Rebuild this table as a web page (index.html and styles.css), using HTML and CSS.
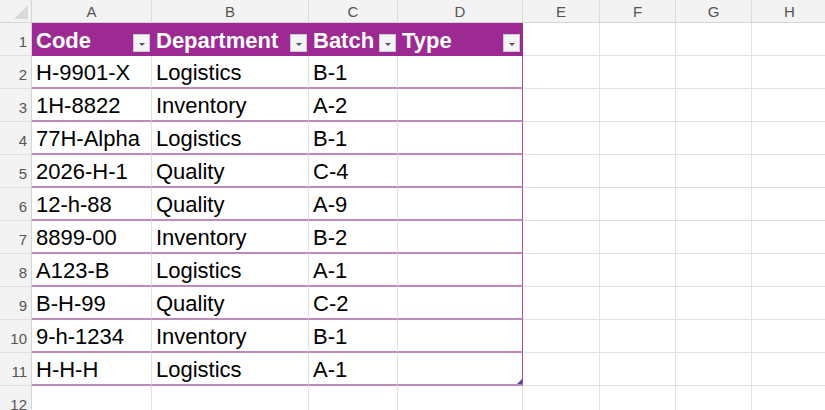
FILE: index.html
```html
<!DOCTYPE html>
<html>
<head>
<meta charset="utf-8">
<link rel="stylesheet" href="styles.css">
</head>
<body>
<div class="sheet">
  <div class="corner"><span class="tri"></span></div>
  <div class="colh">A</div><div class="colh">B</div><div class="colh">C</div><div class="colh">D</div><div class="colh">E</div><div class="colh">F</div><div class="colh">G</div><div class="colh">H</div>

  <div class="rowh">1</div>
  <div class="th">Code<span class="dd"></span></div>
  <div class="th">Department<span class="dd"></span></div>
  <div class="th">Batch<span class="dd"></span></div>
  <div class="th last">Type<span class="dd"></span></div>
  <div class="c"></div><div class="c"></div><div class="c"></div><div class="c"></div>

  <div class="rowh">2</div><div class="td">H-9901-X</div><div class="td">Logistics</div><div class="td">B-1</div><div class="td last"></div><div class="c"></div><div class="c"></div><div class="c"></div><div class="c"></div>
  <div class="rowh">3</div><div class="td">1H-8822</div><div class="td">Inventory</div><div class="td">A-2</div><div class="td last"></div><div class="c"></div><div class="c"></div><div class="c"></div><div class="c"></div>
  <div class="rowh">4</div><div class="td">77H-Alpha</div><div class="td">Logistics</div><div class="td">B-1</div><div class="td last"></div><div class="c"></div><div class="c"></div><div class="c"></div><div class="c"></div>
  <div class="rowh">5</div><div class="td">2026-H-1</div><div class="td">Quality</div><div class="td">C-4</div><div class="td last"></div><div class="c"></div><div class="c"></div><div class="c"></div><div class="c"></div>
  <div class="rowh">6</div><div class="td">12-h-88</div><div class="td">Quality</div><div class="td">A-9</div><div class="td last"></div><div class="c"></div><div class="c"></div><div class="c"></div><div class="c"></div>
  <div class="rowh">7</div><div class="td">8899-00</div><div class="td">Inventory</div><div class="td">B-2</div><div class="td last"></div><div class="c"></div><div class="c"></div><div class="c"></div><div class="c"></div>
  <div class="rowh">8</div><div class="td">A123-B</div><div class="td">Logistics</div><div class="td">A-1</div><div class="td last"></div><div class="c"></div><div class="c"></div><div class="c"></div><div class="c"></div>
  <div class="rowh">9</div><div class="td">B-H-99</div><div class="td">Quality</div><div class="td">C-2</div><div class="td last"></div><div class="c"></div><div class="c"></div><div class="c"></div><div class="c"></div>
  <div class="rowh">10</div><div class="td">9-h-1234</div><div class="td">Inventory</div><div class="td">B-1</div><div class="td last"></div><div class="c"></div><div class="c"></div><div class="c"></div><div class="c"></div>
  <div class="rowh">11</div><div class="td">H-H-H</div><div class="td">Logistics</div><div class="td">A-1</div><div class="td last"><span class="grip"></span></div><div class="c"></div><div class="c"></div><div class="c"></div><div class="c"></div>
  <div class="rowh">12</div><div class="c"></div><div class="c"></div><div class="c"></div><div class="c"></div><div class="c"></div><div class="c"></div><div class="c"></div><div class="c"></div>
</div>
</body>
</html>
```

FILE: styles.css
```css
html, body {
  margin: 0;
  padding: 0;
  background: #ffffff;
  overflow: hidden;
}
.sheet {
  display: grid;
  grid-template-columns: 32px 120px 157px 89px 125px 77px 76px 76px 76px;
  grid-template-rows: 23px repeat(11, 33px) 33px;
  width: 828px;
  font-family: "Liberation Sans", Arial, sans-serif;
}
.corner {
  background: #f3f3f3;
  border-right: 1px solid #d4d4d4;
  border-bottom: 1px solid #d4d4d4;
  box-sizing: border-box;
  position: relative;
}
.tri {
  position: absolute;
  right: 3px;
  bottom: 3px;
  width: 0;
  height: 0;
  border-left: 14px solid transparent;
  border-bottom: 14px solid #dadada;
}
.colh {
  background: #f3f3f3;
  border-right: 1px solid #dcdcdc;
  border-bottom: 1px solid #d4d4d4;
  box-sizing: border-box;
  color: #555555;
  font-size: 15px;
  display: flex;
  align-items: center;
  justify-content: center;
  padding-top: 1px;
}
.rowh {
  background: #f3f3f3;
  border-right: 1px solid #d4d4d4;
  border-bottom: 1px solid #e0e0e0;
  box-sizing: border-box;
  color: #555555;
  font-size: 15px;
  display: flex;
  align-items: flex-end;
  justify-content: flex-end;
  padding: 0 4px 5px 0;
}
.c {
  border-right: 1px solid #e1e1e1;
  border-bottom: 1px solid #e1e1e1;
  box-sizing: border-box;
}
.th {
  background: #9c2a92;
  color: #ffffff;
  font-weight: bold;
  font-size: 22px;
  box-sizing: border-box;
  border-bottom: 1px solid #9c2a92;
  display: flex;
  align-items: flex-end;
  padding: 0 0 1px 4px;
  position: relative;
  white-space: nowrap;
  overflow: hidden;
}
.th.last {
  border-right: 1px solid #9c2a92;
}
.dd {
  position: absolute;
  right: 2px;
  bottom: 3px;
  width: 17px;
  height: 18px;
  box-sizing: border-box;
  background: #f4f4f6;
  border: 1px solid #c9c9d0;
}
.dd::after {
  content: "";
  position: absolute;
  left: 5px;
  top: 8px;
  width: 0;
  height: 0;
  border-left: 3px solid transparent;
  border-right: 3px solid transparent;
  border-top: 3px solid #555555;
}
.td {
  color: #000000;
  font-size: 22px;
  box-sizing: border-box;
  border-right: 1px solid #e1e1e1;
  border-bottom: 2px solid #c08abb;
  display: flex;
  align-items: flex-end;
  padding: 0 0 1px 4px;
  white-space: nowrap;
  overflow: hidden;
  position: relative;
}
.td.last {
  border-right: 1px solid #a34e9c;
}
.grip {
  position: absolute;
  right: 0;
  bottom: 0;
  width: 0;
  height: 0;
  border-left: 5px solid transparent;
  border-bottom: 5px solid #4a4aa8;
}
```
